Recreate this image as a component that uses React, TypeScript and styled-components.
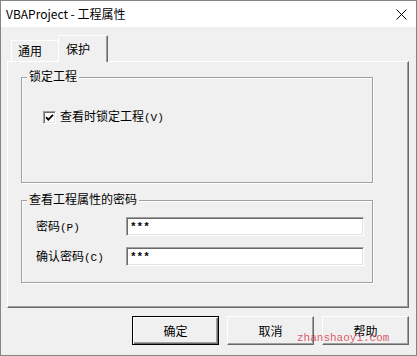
import React from 'react';
import styled, {createGlobalStyle} from 'styled-components';

const GlobalStyle = createGlobalStyle`
  html, body {
    margin: 0;
    padding: 0;
    background: #ffffff;
  }
  body {
    font-family: "Noto Sans CJK SC", "Noto Sans", sans-serif;
    font-size: 12px;
    color: #000;
  }
`;

const Window = styled.div`
  position: relative;
  width: 417px;
  height: 356px;
  box-sizing: border-box;
  border: 1px solid #858585;
  display: flex;
  flex-direction: column;
  background: #f0f0f0;
`;

const TitleBar = styled.div`
  height: 26px;
  flex-shrink: 0;
  background: #fff;
  display: flex;
  align-items: center;
  justify-content: space-between;
  padding: 0 9px 0 5px;
  font-size: 12px;
  line-height: 16px;
`;

const CloseGlyph = styled.svg`
  width: 11px;
  height: 11px;
  display: block;
`;

const Body = styled.div`
  flex: 1;
  display: flex;
  flex-direction: column;
  padding: 8px 7px 0 6px;
`;

const TabStrip = styled.div`
  display: flex;
  align-items: flex-end;
  height: 26px;
  padding-left: 4px;
  position: relative;
  z-index: 1;
`;

const Tab = styled.div<{ $active?: boolean; $width: number }>`
  box-sizing: border-box;
  width: ${p => p.$width}px;
  height: ${p => (p.$active ? 27 : 21)}px;
  margin-bottom: ${p => (p.$active ? -1 : 0)}px;
  padding-left: ${p => (p.$active ? 7 : 6)}px;
  display: flex;
  align-items: ${p => (p.$active ? 'flex-start' : 'center')};
  padding-top: ${p => (p.$active ? 5 : 0)}px;
  line-height: 16px;
  background: #f0f0f0;
  border-top: 1px solid #fff;
  border-left: 1px solid #fff;
  border-right: ${p => (p.$active ? '1px solid #696969' : 'none')};
  box-shadow: ${p => (p.$active ? 'inset -1px 0 0 #a0a0a0' : 'none')};
`;

const Panel = styled.div`
  box-sizing: border-box;
  height: 247px;
  border-top: 1px solid #fff;
  border-left: 1px solid #fff;
  border-right: 1px solid #696969;
  border-bottom: 1px solid #696969;
  box-shadow: inset -1px -1px 0 #a0a0a0;
  padding: 0 0 0 13px;
  display: flex;
  flex-direction: column;
`;

const GroupBox = styled.div<{ $height: number; $top: number }>`
  box-sizing: border-box;
  width: 352px;
  height: ${p => p.$height}px;
  margin-top: ${p => p.$top}px;
  border: 1px solid #a0a0a0;
  box-shadow: 1px 1px 0 #fff, inset 1px 1px 0 #fff;
  display: flex;
  flex-direction: column;
  align-items: flex-start;
`;

const Caption = styled.span`
  margin: -10px 0 0 5px;
  padding: 0 2px;
  line-height: 16px;
  background: #f0f0f0;
`;

const CheckRow = styled.label`
  display: flex;
  align-items: center;
  gap: 4px;
  margin: 24px 0 0 21px;
  line-height: 16px;
`;

const CheckBox = styled.span`
  box-sizing: border-box;
  width: 13px;
  height: 13px;
  background: #fff;
  border: 1px solid;
  border-color: #a0a0a0 #fff #fff #a0a0a0;
  box-shadow: inset 1px 1px 0 #696969, inset -1px -1px 0 #e3e3e3;
  display: flex;
  align-items: center;
  justify-content: center;
`;

const Hotkey = styled.span`
  font-family: "Liberation Mono", monospace;
  font-size: 11px;
`;

const FieldGrid = styled.div`
  display: grid;
  grid-template-columns: 90px 238px;
  grid-auto-rows: 19px;
  row-gap: 11px;
  align-items: center;
  margin: 10px 0 0 14px;
`;

const FieldLabel = styled.span`
  line-height: 16px;
`;

const TextBox = styled.div`
  box-sizing: border-box;
  height: 19px;
  background: #fff;
  border: 1px solid;
  border-color: #a0a0a0 #fff #fff #a0a0a0;
  box-shadow: inset 1px 1px 0 #696969, inset -1px -1px 0 #e3e3e3;
  padding: 0 3px;
  display: flex;
  align-items: center;
  font-family: "Liberation Mono", monospace;
  font-size: 11px;
  font-weight: bold;
`;

const ButtonRow = styled.div`
  display: flex;
  justify-content: flex-end;
  gap: 8px;
  margin-top: 8px;
`;

const Button = styled.button<{ $default?: boolean }>`
  box-sizing: border-box;
  width: 87px;
  height: 29px;
  margin: 0;
  padding: 0;
  font: inherit;
  font-size: 12px;
  color: #000;
  background: #f0f0f0;
  border: 1px solid;
  border-color: ${p => (p.$default ? '#000' : '#fff #696969 #696969 #fff')};
  box-shadow: ${p => (p.$default
    ? 'inset 1px 1px 0 #fff, inset -1px -1px 0 #696969, inset -2px -2px 0 #a0a0a0'
    : 'inset -1px -1px 0 #a0a0a0')};
`;

const Watermark = styled.span`
  position: absolute;
  left: 296px;
  top: 331px;
  font-family: "Liberation Mono", monospace;
  font-size: 11px;
  color: rgba(214, 58, 78, 0.85);
  pointer-events: none;
`;

export default function App() {
    return (
        <>
            <GlobalStyle/>
            <Window>
                <TitleBar>
                    <span>VBAProject - 工程属性</span>
                    <CloseGlyph viewBox="0 0 11 11">
                        <path d="M0.5 0.5 L10.5 10.5 M10.5 0.5 L0.5 10.5" stroke="#000" strokeWidth="1"/>
                    </CloseGlyph>
                </TitleBar>
                <Body>
                    <TabStrip>
                        <Tab $width={47}>通用</Tab>
                        <Tab $width={50} $active>保护</Tab>
                    </TabStrip>
                    <Panel>
                        <GroupBox $height={106} $top={15}>
                            <Caption>锁定工程</Caption>
                            <CheckRow>
                                <CheckBox>
                                    <svg width="9" height="9" viewBox="0 0 9 9">
                                        <path d="M1 4.2 L3.3 6.6 L8 1.8" fill="none" stroke="#000" strokeWidth="1.8"/>
                                    </svg>
                                </CheckBox>
                                <span>查看时锁定工程<Hotkey>(V)</Hotkey></span>
                            </CheckRow>
                        </GroupBox>
                        <GroupBox $height={83} $top={17}>
                            <Caption>查看工程属性的密码</Caption>
                            <FieldGrid>
                                <FieldLabel>密码<Hotkey>(P)</Hotkey></FieldLabel>
                                <TextBox>***</TextBox>
                                <FieldLabel>确认密码<Hotkey>(C)</Hotkey></FieldLabel>
                                <TextBox>***</TextBox>
                            </FieldGrid>
                        </GroupBox>
                    </Panel>
                    <ButtonRow>
                        <Button $default>确定</Button>
                        <Button>取消</Button>
                        <Button>帮助</Button>
                    </ButtonRow>
                </Body>
                <Watermark>zhanshaoyi.com</Watermark>
            </Window>
        </>
    );
}
